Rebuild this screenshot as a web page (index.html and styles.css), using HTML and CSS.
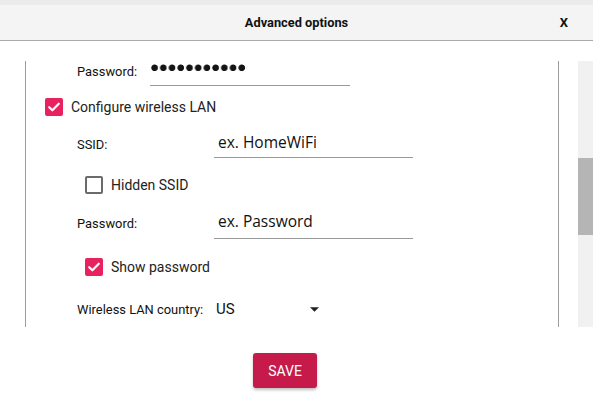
FILE: index.html
```html
<!DOCTYPE html>
<html lang="en">
<head>
<meta charset="utf-8">
<title>Advanced options</title>
<link rel="stylesheet" href="styles.css">
</head>
<body>
<div class="window">
  <div class="topband"></div>
  <header class="titlebar">
    <span class="spacer"></span>
    <span class="title">Advanced options</span>
    <span class="close">X</span>
  </header>
  <div class="scroll">
    <div class="panel">
      <div class="field row-pass">
        <span class="label label-a">Password:</span>
        <span class="input input-a"><span class="dots" role="img" aria-label="Hidden password, 11 characters"></span></span>
      </div>
      <div class="check check-main">
        <span class="box checked"><svg viewBox="0 0 18 18" width="18" height="18"><path d="M4.2 9.2l3.2 3.1 6.4-6.6" fill="none" stroke="#fff" stroke-width="2.2" stroke-linecap="round" stroke-linejoin="round"/></svg></span>
        <span class="check-text">Configure wireless LAN</span>
      </div>
      <div class="field row-ssid">
        <span class="label label-b">SSID:</span>
        <span class="input input-b">ex. HomeWiFi</span>
      </div>
      <div class="check check-sub check-hidden">
        <span class="box"></span>
        <span class="check-text">Hidden SSID</span>
      </div>
      <div class="field row-pass2">
        <span class="label label-b">Password:</span>
        <span class="input input-b input-c">ex. Password</span>
      </div>
      <div class="check check-sub check-show">
        <span class="box checked"><svg viewBox="0 0 18 18" width="18" height="18"><path d="M4.2 9.2l3.2 3.1 6.4-6.6" fill="none" stroke="#fff" stroke-width="2.2" stroke-linecap="round" stroke-linejoin="round"/></svg></span>
        <span class="check-text">Show password</span>
      </div>
      <div class="field row-country">
        <span class="label label-c">Wireless LAN country:</span>
        <span class="select"><span class="select-value">US</span><svg class="caret" viewBox="0 0 10 5" width="9" height="5"><path d="M0 0h10L5 5z" fill="#222"/></svg></span>
      </div>
    </div>
    <div class="scrollbar"><div class="thumb"></div></div>
  </div>
  <div class="actions">
    <button class="save">SAVE</button>
  </div>
</div>
</body>
</html>
```

FILE: styles.css
```css
* { box-sizing: border-box; }

html, body {
  margin: 0;
  padding: 0;
  background: #ffffff;
}

body {
  font-family: Roboto, "Liberation Sans", sans-serif;
  color: #1a1a1a;
  width: 600px;
  height: 403px;
  overflow: hidden;
}

.window {
  width: 593px;
}

.topband {
  height: 5px;
  background: #ebebeb;
}

.titlebar {
  height: 36px;
  background: #f4f4f4;
  border-bottom: 1px solid #a9a9a9;
  display: grid;
  grid-template-columns: 1fr auto 1fr;
  align-items: center;
  padding: 0 0 1px 0;
}

.title {
  font-weight: bold;
  font-size: 12.8px;
  color: #111;
}

.close {
  justify-self: end;
  margin-right: 25px;
  font-weight: bold;
  font-size: 13px;
  color: #111;
}

.scroll {
  margin-top: 20px;
  height: 266px;
  display: flex;
}

.panel {
  margin-left: 25px;
  width: 534px;
  height: 266px;
  border-left: 1px solid #9e9e9e;
  border-right: 1px solid #9e9e9e;
  overflow: hidden;
  display: flex;
  flex-direction: column;
}

.scrollbar {
  margin-left: 19px;
  width: 15px;
  height: 266px;
  background: #f1f1f1;
  padding-top: 97px;
}

.thumb {
  height: 77px;
  background: #b5b5b5;
}

/* fields */
.field {
  display: flex;
  align-items: flex-start;
  margin-left: 51px;
}

.label {
  font-size: 12.9px;
  color: #111;
}

.label-a { width: 73px; margin-top: 3px; }
.label-b { width: 137px; margin-top: 6px; }
.label-c { width: 139px; margin-top: 0; }

.input {
  border-bottom: 1px solid #9a9a9a;
  width: 200px;
}

.input-a {
  height: 25px;
  padding: 3px 0 0 1px;
}

.dots {
  display: block;
  width: 96px;
  height: 8px;
  background-image: radial-gradient(circle at 3.6px 3.8px, #141414 2.9px, rgba(20, 20, 20, 0) 3.7px);
  background-size: 8.73px 8px;
  background-repeat: repeat-x;
}

.input-b {
  width: 199px;
  font-family: "Open Sans", "Noto Sans", sans-serif;
  font-size: 15.5px;
  line-height: 22px;
  padding: 0 0 4px 4px;
  color: #111;
}

.input-c {
  padding-bottom: 6px;
}

.row-pass { margin-top: 0; }
.row-ssid { margin-top: 15px; }
.row-pass2 { margin-top: 16px; }
.row-country { margin-top: 24px; align-items: center; }

.select {
  display: flex;
  align-items: center;
  width: 103px;
  justify-content: space-between;
}

.select-value {
  font-size: 15px;
  color: #111;
}

/* checkboxes */
.check {
  display: flex;
  align-items: center;
  gap: 8px;
}

.check-main { margin-left: 19px; margin-top: 12px; }
.check-sub { margin-left: 59px; }
.check-hidden { margin-top: 18px; }
.check-show { margin-top: 19px; }

.box {
  width: 18px;
  height: 18px;
  border-radius: 2px;
  border: 2px solid #6b6b6b;
  background: #fff;
  flex: none;
  display: block;
}

.box.checked {
  border: none;
  background: #e8215f;
}

.box svg { display: block; }

.check-text {
  font-size: 14px;
  color: #222;
}

/* actions */
.actions {
  padding-left: 253px;
  margin-top: 26px;
}

.save {
  width: 64px;
  height: 35px;
  border: none;
  border-radius: 3px;
  background: #c51a4a;
  color: #fff;
  font-family: Roboto, "Liberation Sans", sans-serif;
  font-size: 14px;
  padding: 0;
  box-shadow: 0 2px 3px rgba(0, 0, 0, 0.25);
}
```
